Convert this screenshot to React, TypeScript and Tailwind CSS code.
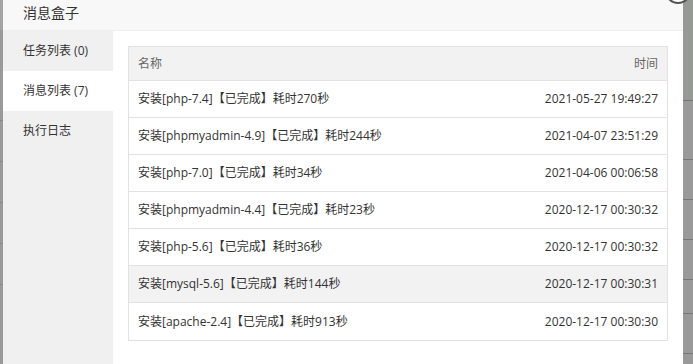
const rows = [
  { name: "安装[php-7.4]【已完成】耗时270秒", time: "2021-05-27 19:49:27" },
  { name: "安装[phpmyadmin-4.9]【已完成】耗时244秒", time: "2021-04-07 23:51:29" },
  { name: "安装[php-7.0]【已完成】耗时34秒", time: "2021-04-06 00:06:58" },
  { name: "安装[phpmyadmin-4.4]【已完成】耗时23秒", time: "2020-12-17 00:30:32" },
  { name: "安装[php-5.6]【已完成】耗时36秒", time: "2020-12-17 00:30:32" },
  { name: "安装[mysql-5.6]【已完成】耗时144秒", time: "2020-12-17 00:30:31", hover: true },
  { name: "安装[apache-2.4]【已完成】耗时913秒", time: "2020-12-17 00:30:30" },
];

const tabs = [
  { label: "任务列表 (0)", active: false },
  { label: "消息列表 (7)", active: true },
  { label: "执行日志", active: false },
];

export default function App() {
  return (
    <div
      className="relative flex h-[364px] w-[693px] overflow-hidden bg-[#999]"
      style={{ fontFamily: '"Open Sans", "Noto Sans CJK SC", sans-serif' }}
    >
      {/* page behind the overlay */}
      <div className="flex w-[3px] flex-col bg-[#9a9a9a]">
        <div className="h-[30px] bg-[#a2a5a2]" />
        <div className="mt-[90px] h-px bg-[#888]" />
        <div className="mt-[40px] h-px bg-[#888]" />
        <div className="mt-[40px] h-px bg-[#888]" />
        <div className="mt-[40px] h-px bg-[#888]" />
        <div className="mt-[40px] h-px bg-[#888]" />
      </div>

      {/* modal */}
      <div className="flex w-[680px] flex-col bg-white">
        <div className="flex h-[31px] shrink-0 items-center border-b border-[#eee] bg-[#f8f8f8] pl-[20px] pb-[6px] text-[14px] text-[#333]">
          消息盒子
        </div>
        <div className="flex flex-1">
          <div className="flex w-[110px] flex-col bg-[#f0f0f0]">
            {tabs.map((t) => (
              <div
                key={t.label}
                className={`flex h-[40px] items-center pl-[20px] text-[12px] text-[#333] ${
                  t.active ? "bg-white" : ""
                }`}
              >
                {t.label}
              </div>
            ))}
          </div>
          <div className="flex-1 px-[15px] pt-[15px]">
            <div className="border border-[#e2e2e2] text-[12px]">
              <div className="flex h-[34px] items-center justify-between border-b border-[#e2e2e2] bg-[#f2f2f2] px-[9px] text-[#666]">
                <span>名称</span>
                <span>时间</span>
              </div>
              {rows.map((r, i) => (
                <div
                  key={i}
                  className={`flex h-[37px] items-center justify-between px-[9px] text-[#333] ${
                    i < rows.length - 1 ? "border-b border-[#e2e2e2]" : ""
                  } ${r.hover ? "bg-[#f2f2f2]" : ""}`}
                >
                  <span>{r.name}</span>
                  <span>{r.time}</span>
                </div>
              ))}
            </div>
          </div>
        </div>
      </div>

      <div className="flex flex-1 flex-col bg-[#999]">
        <div className="h-[100px] bg-[#959a95]" />
        <div className="h-px bg-[#777]" />
        <div className="mt-[58px] h-px bg-[#777]" />
        <div className="mt-[39px] h-px bg-[#777]" />
        <div className="mt-[39px] h-px bg-[#777]" />
        <div className="mt-[39px] h-px bg-[#777]" />
        <div className="mt-[33px] h-px bg-[#777]" />
        <div className="mt-[39px] h-px bg-[#777]" />
      </div>

      {/* close button peeking in at the top */}
      <div className="absolute right-[2px] top-[-22px] h-[26px] w-[26px] rounded-full border-2 border-[#555] bg-white" />
    </div>
  );
}
